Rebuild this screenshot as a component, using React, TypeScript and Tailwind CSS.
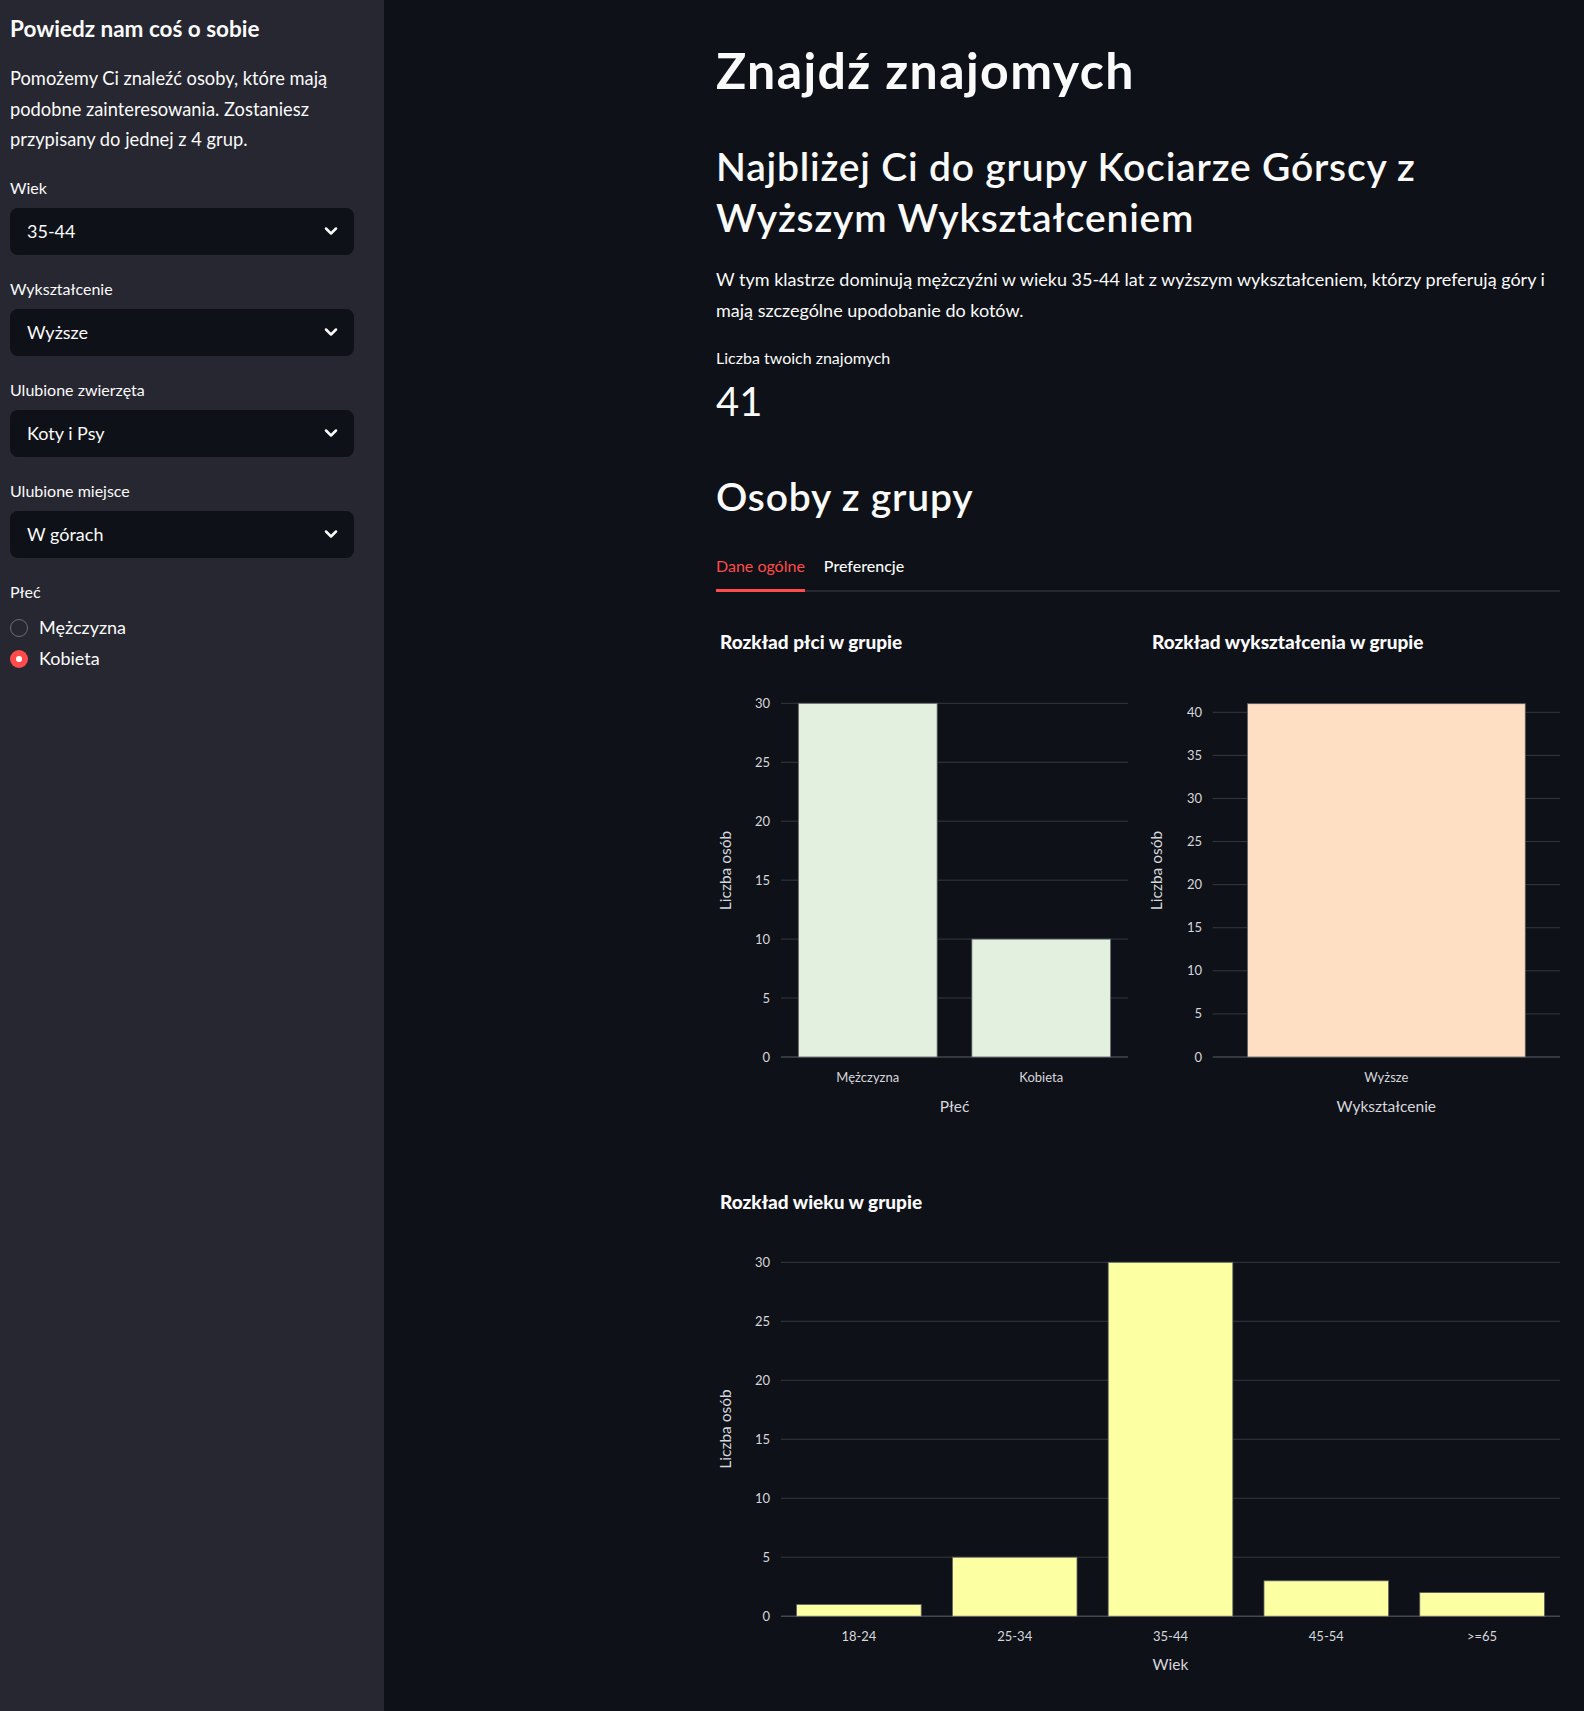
import { ChevronDown } from "lucide-react";

const GRID = "#363841";
const TICK = "#d6d7dc";

type Bar = { label: string; value: number };

type ChartProps = {
  title: string;
  width: number;
  titleX: number;
  x0: number;
  x1: number;
  yTop: number;
  yBottom: number;
  max: number;
  ticks: number[];
  bars: Bar[];
  color: string;
  xTitle: string;
  yTitleX: number;
  tickLabelX: number;
  xLabelY: number;
  xTitleY: number;
  yTitleY: number;
};

function BarChart(p: ChartProps) {
  const band = (p.x1 - p.x0) / p.bars.length;
  const scale = (v: number) => p.yBottom - ((p.yBottom - p.yTop) * v) / p.max;
  return (
    <svg width={p.width} height={500} className="block overflow-visible">
      <text x={p.titleX} y={27.5} fill="#fafafa" fontSize={19} fontWeight={900}>
        {p.title}
      </text>
      {p.ticks.map((t) => (
        <g key={t}>
          <line x1={p.x0} x2={p.x1} y1={scale(t)} y2={scale(t)} stroke={t === 0 ? "#44464f" : GRID} strokeWidth={t === 0 ? 1.5 : 1} />
          <text x={p.tickLabelX} y={scale(t) + 4.5} textAnchor="end" fill={TICK} fontSize={13}>
            {t}
          </text>
        </g>
      ))}
      {p.bars.map((b, i) => {
        const x = p.x0 + band * i + band * 0.1;
        const y = scale(b.value);
        return (
          <g key={b.label}>
            <rect x={x} y={y} width={band * 0.8} height={p.yBottom - y} fill={p.color} stroke="#5c5e60" strokeWidth={0.8} />
            <text x={x + band * 0.4} y={p.xLabelY} textAnchor="middle" fill={TICK} fontSize={13}>
              {b.label}
            </text>
          </g>
        );
      })}
      <text x={(p.x0 + p.x1) / 2} y={p.xTitleY} textAnchor="middle" fill={TICK} fontSize={15.5}>
        {p.xTitle}
      </text>
      <text
        x={p.yTitleX}
        y={p.yTitleY}
        textAnchor="middle"
        fill={TICK}
        fontSize={15.5}
        transform={`rotate(-90 ${p.yTitleX} ${p.yTitleY})`}
        dominantBaseline="middle"
      >
        Liczba osób
      </text>
    </svg>
  );
}

function SelectBox({ label, value }: { label: string; value: string }) {
  return (
    <div className="mt-[24px] first:mt-0">
      <div className="text-[16px] leading-[20px]">{label}</div>
      <div className="mt-[10px] flex h-[47px] items-center justify-between rounded-[8px] bg-[#0e1117] pl-[17px] pr-[13px]">
        <span className="text-[18px]">{value}</span>
        <ChevronDown size={20} strokeWidth={3} />
      </div>
    </div>
  );
}

function Radio({ label, checked }: { label: string; checked?: boolean }) {
  return (
    <div className="flex h-[31px] items-center gap-[11px]">
      {checked ? (
        <span className="flex h-[18px] w-[18px] items-center justify-center rounded-full bg-[#ff4b4b]">
          <span className="h-[6px] w-[6px] rounded-full bg-white" />
        </span>
      ) : (
        <span className="h-[18px] w-[18px] rounded-full border border-[#6b6d76]" />
      )}
      <span className="text-[18px]">{label}</span>
    </div>
  );
}

export default function App() {
  return (
    <div className="flex min-h-[1711px] bg-[#0e1117] font-['Lato','Noto_Sans',sans-serif] text-[#fafafa]">
      <aside className="w-[384px] shrink-0 bg-[#262730] pl-[10px] pr-[30px] pt-[14px]">
        <h2 className="text-[22.5px] font-bold leading-[30px]">Powiedz nam coś o sobie</h2>
        <p className="mt-[19px] text-[18.3px] leading-[30.5px]">
          Pomożemy Ci znaleźć osoby, które mają
          <br />
          podobne zainteresowania. Zostaniesz
          <br />
          przypisany do jednej z 4 grup.
        </p>
        <div className="mt-[23px]">
          <SelectBox label="Wiek" value="35-44" />
          <SelectBox label="Wykształcenie" value="Wyższe" />
          <SelectBox label="Ulubione zwierzęta" value="Koty i Psy" />
          <SelectBox label="Ulubione miejsce" value="W górach" />
        </div>
        <div className="mt-[24px] text-[16px] leading-[20px]">Płeć</div>
        <div className="mt-[10.5px]">
          <Radio label="Mężczyzna" />
          <Radio label="Kobieta" checked />
        </div>
      </aside>

      <main className="flex-1 pl-[332px]">
        <div className="w-[844px] pt-[40px]">
          <h1 className="text-[50px] font-bold leading-[60px] tracking-[1.4px]">Znajdź znajomych</h1>
          <h2 className="mt-[41px] text-[39px] font-semibold leading-[51px] tracking-[0.8px]">
            Najbliżej Ci do grupy Kociarze Górscy z
            <br />
            Wyższym Wykształceniem
          </h2>
          <p className="mt-[21px] text-[18px] leading-[30.5px]">
            W tym klastrze dominują mężczyźni w wieku 35-44 lat z wyższym wykształceniem, którzy preferują góry i
            <br />
            mają szczególne upodobanie do kotów.
          </p>
          <div className="mt-[23px] text-[16px] leading-[20px]">Liczba twoich znajomych</div>
          <div className="mt-[8.5px] text-[40px] font-normal leading-[48px]">41</div>
          <h2 className="mt-[46.5px] text-[39px] font-semibold leading-[51px] tracking-[0.8px]">Osoby z grupy</h2>

          <div className="mt-[32px] flex gap-[19px] border-b-2 border-[#262730]">
            <div className="-mb-[2px] border-b-[3px] border-[#ff4b4b] pb-[11px] text-[16px] leading-[24px] text-[#ff4b4b]">
              Dane ogólne
            </div>
            <div className="pb-[12px] text-[16px] font-medium leading-[24px]">Preferencje</div>
          </div>

          <div className="mt-[29px] flex gap-[16px]">
            <BarChart
              title="Rozkład płci w grupie"
              width={414}
              titleX={4}
              x0={65}
              x1={412}
              yTop={82.3}
              yBottom={436}
              max={30}
              ticks={[0, 5, 10, 15, 20, 25, 30]}
              bars={[
                { label: "Mężczyzna", value: 30 },
                { label: "Kobieta", value: 10 },
              ]}
              color="#e3efdf"
              xTitle="Płeć"
              yTitleX={11}
              yTitleY={249.5}
              tickLabelX={54}
              xLabelY={461}
              xTitleY={491}
            />
            <BarChart
              title="Rozkład wykształcenia w grupie"
              width={414}
              titleX={6}
              x0={66.7}
              x1={414}
              yTop={91.3}
              yBottom={436}
              max={40}
              ticks={[0, 5, 10, 15, 20, 25, 30, 35, 40]}
              bars={[{ label: "Wyższe", value: 41 }]}
              color="#ffdfc4"
              xTitle="Wykształcenie"
              yTitleX={12}
              yTitleY={249.5}
              tickLabelX={56}
              xLabelY={461}
              xTitleY={491}
            />
          </div>

          <div className="mt-[60px]">
            <BarChart
              title="Rozkład wieku w grupie"
              width={844}
              titleX={4}
              x0={65}
              x1={844}
              yTop={81.3}
              yBottom={435.2}
              max={30}
              ticks={[0, 5, 10, 15, 20, 25, 30]}
              bars={[
                { label: "18-24", value: 1 },
                { label: "25-34", value: 5 },
                { label: "35-44", value: 30 },
                { label: "45-54", value: 3 },
                { label: ">=65", value: 2 },
              ]}
              color="#fdffa3"
              xTitle="Wiek"
              yTitleX={11}
              yTitleY={248}
              tickLabelX={54}
              xLabelY={459.5}
              xTitleY={489}
            />
          </div>
        </div>
      </main>
    </div>
  );
}
